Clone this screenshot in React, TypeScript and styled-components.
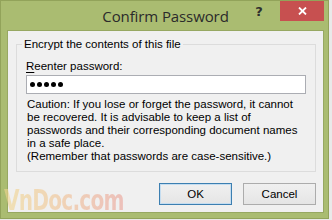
import styled, { createGlobalStyle } from "styled-components";

const GlobalStyle = createGlobalStyle`
    html, body {
        margin: 0;
        padding: 0;
        background: #e9e9e9;
    }
    body {
        font-family: "Liberation Sans", Arial, sans-serif;
        font-size: 11.5px;
        color: #000;
    }
`;

const Window = styled.div`
    position: relative;
    box-sizing: border-box;
    width: 329px;
    height: 219px;
    background-color: #aabc71;
    border: 1px solid #92a35a;
    padding: 0 4px 5px 6px;
    display: flex;
    flex-direction: column;
    overflow: hidden;
`;

const TitleBar = styled.div`
    height: 30px;
    display: grid;
    grid-template-columns: 1fr auto 1fr;
    align-items: start;
`;

const Title = styled.div`
    grid-column: 2;
    padding-top: 5px;
    font-family: "Open Sans", "Noto Sans", sans-serif;
    font-size: 15px;
    line-height: 20px;
    color: #2b2b2b;
    letter-spacing: -0.1px;
`;

const CaptionButtons = styled.div`
    grid-column: 3;
    justify-self: end;
    display: flex;
    align-items: flex-start;
`;

const HelpButton = styled.div`
    width: 26px;
    height: 20px;
    padding-top: 3px;
    text-align: center;
    font-family: "DejaVu Sans", sans-serif;
    font-weight: bold;
    font-size: 13px;
    color: #2e2e2e;
    margin-right: 8px;
`;

const CloseButton = styled.div`
    width: 44px;
    height: 20px;
    background-color: #c75050;
    display: flex;
    align-items: center;
    justify-content: center;
`;

const Client = styled.div`
    flex: 1;
    background-color: #f0f0f0;
    border: 1px solid #97a862;
    display: flex;
    flex-direction: column;
    padding: 0 7px 7px 8px;
`;

const GroupBox = styled.fieldset`
    margin: 5px 0 0 0;
    padding: 0 9px 8px 9px;
    border: 1px solid #dcdcdc;
    border-radius: 0;
    min-width: 0;
`;

const Legend = styled.legend`
    margin-left: -4px;
    padding: 0 2px;
    line-height: 16px;
`;

const FieldLabel = styled.div`
    margin-top: 6px;
    line-height: 16px;

    u {
        text-decoration: underline;
        text-underline-offset: 2px;
    }
`;

const PasswordBox = styled.div`
    box-sizing: border-box;
    margin-top: 1px;
    width: 280px;
    height: 19px;
    background: #fff;
    border: 1px solid #abadb3;
    display: flex;
    align-items: center;
    gap: 2px;
    padding-left: 3px;
`;

const Dot = styled.span`
    width: 5px;
    height: 5px;
    border-radius: 50%;
    background: #000;
`;

const Caution = styled.div`
    margin: 4px 0 0 1px;
    display: flex;
    flex-direction: column;
`;

const CautionLine = styled.div`
    height: 13px;
    line-height: 13px;
    white-space: nowrap;
`;

const ButtonRow = styled.div`
    margin-top: 11px;
    display: flex;
    justify-content: flex-end;
    gap: 11px;
`;

const Button = styled.button<{ $default?: boolean }>`
    box-sizing: border-box;
    width: 73px;
    height: 22px;
    font-family: "Liberation Sans", Arial, sans-serif;
    font-size: 11.5px;
    color: #000;
    background: linear-gradient(#f0f0f0, #e5e5e5);
    border: 1px solid ${(p) => (p.$default ? "#3c7fb1" : "#acacac")};
    box-shadow: ${(p) => (p.$default ? "inset 0 0 0 1px #c5ddf0" : "none")};
    border-radius: 0;
    padding: 0;
`;

const Watermark = styled.div`
    position: absolute;
    left: 3px;
    bottom: 4px;
    font-family: "DejaVu Sans Condensed", "DejaVu Sans", sans-serif;
    font-weight: 900;
    font-size: 28px;
    line-height: 26px;
    letter-spacing: -1px;
    transform: scaleX(0.8);
    transform-origin: left bottom;
    background: linear-gradient(90deg, #f0d78f 0%, #f1c590 40%, #eba197 100%);
    -webkit-background-clip: text;
    background-clip: text;
    color: transparent;
    opacity: 0.6;
    pointer-events: none;
`;

const cautionLines = [
    "Caution: If you lose or forget the password, it cannot",
    "be recovered. It is advisable to keep a list of",
    "passwords and their corresponding document names",
    "in a safe place.",
    "(Remember that passwords are case-sensitive.)",
];

export default function App() {
    return (
        <>
            <GlobalStyle />
            <Window>
                <TitleBar>
                    <Title>Confirm Password</Title>
                    <CaptionButtons>
                        <HelpButton>?</HelpButton>
                        <CloseButton>
                            <svg width="9" height="8" viewBox="0 0 9 8">
                                <path d="M1 0.5 L8 7.5 M8 0.5 L1 7.5" stroke="#fff" strokeWidth="1.8" />
                            </svg>
                        </CloseButton>
                    </CaptionButtons>
                </TitleBar>
                <Client>
                    <GroupBox>
                        <Legend>Encrypt the contents of this file</Legend>
                        <FieldLabel><u>R</u>eenter password:</FieldLabel>
                        <PasswordBox>
                            {[0, 1, 2, 3, 4].map((i) => <Dot key={i} />)}
                        </PasswordBox>
                        <Caution>
                            {cautionLines.map((line) => (
                                <CautionLine key={line}>{line}</CautionLine>
                            ))}
                        </Caution>
                    </GroupBox>
                    <ButtonRow>
                        <Button $default>OK</Button>
                        <Button>Cancel</Button>
                    </ButtonRow>
                </Client>
                <Watermark>VnDoc.com</Watermark>
            </Window>
        </>
    );
}
